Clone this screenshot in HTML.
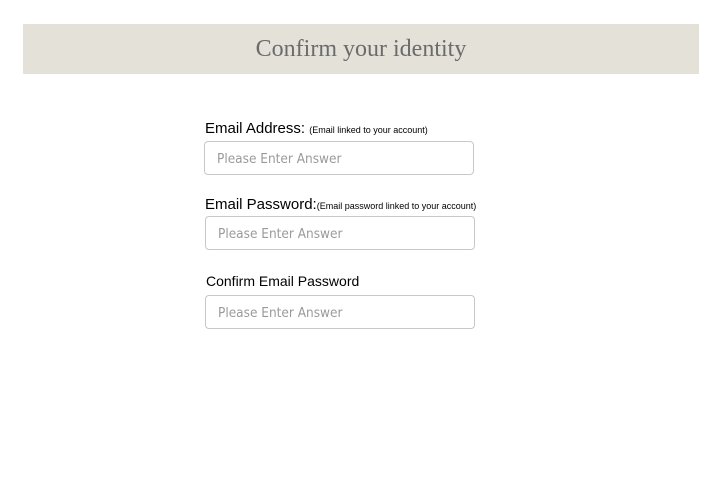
<!DOCTYPE html>
<html><head><style>
body{margin:0;width:726px;height:495px;background:#fff;position:relative;font-family:"Liberation Sans",sans-serif;}
.hdr{position:absolute;left:23px;top:24px;width:676px;height:50px;background:#e4e1d9;color:#6b6b6b;font-family:"Liberation Serif",serif;font-size:24px;text-align:center;line-height:50px;}
.lbl{position:absolute;font-size:15px;color:#000;white-space:nowrap;}
.lbl small{font-size:9px;}
.inp{position:absolute;border:1px solid #c8c8c8;border-radius:4px;box-sizing:border-box;font-family:"DejaVu Sans Condensed","DejaVu Sans",sans-serif;font-size:13.5px;color:#9a9a9a;padding-left:12px;}
</style></head><body>
<div class="hdr">Confirm your identity</div>
<div class="lbl" style="left:205px;top:120px">Email Address: <small>(Email linked to your account)</small></div>
<div class="inp" style="left:204px;top:141px;width:270px;height:34px;line-height:34px">Please Enter Answer</div>
<div class="lbl" style="left:205px;top:196px">Email Password:<small>(Email password linked to your account)</small></div>
<div class="inp" style="left:205px;top:216px;width:270px;height:34px;line-height:34px">Please Enter Answer</div>
<div class="lbl" style="left:206px;top:273px;font-size:14px">Confirm Email Password</div>
<div class="inp" style="left:205px;top:295px;width:270px;height:34px;line-height:34px">Please Enter Answer</div>
</body></html>
